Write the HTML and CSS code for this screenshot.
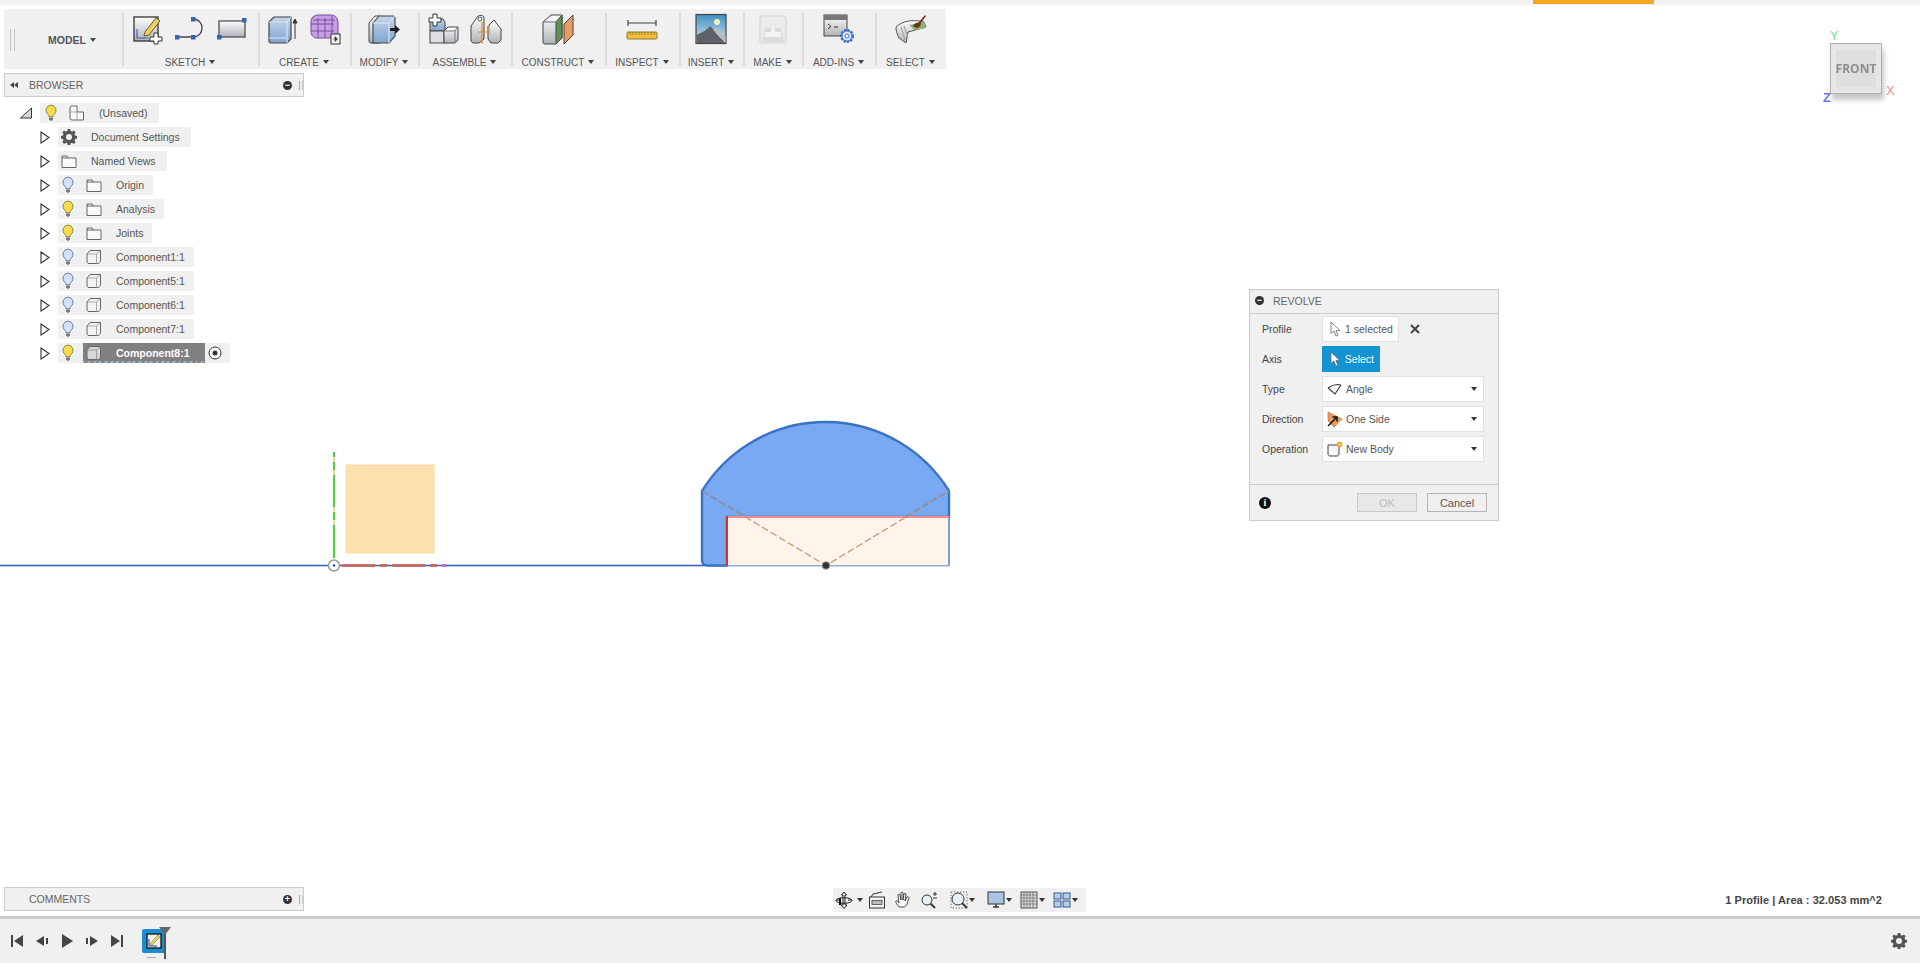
FILE: index.html
```html
<!DOCTYPE html>
<html lang="en">
<head>
    <meta charset="UTF-8">
    <title>Revolve</title>
    <link rel="stylesheet" href="styles.css">
</head>
<body>
    <svg class="defs" width="0" height="0">
        <defs>
            <linearGradient id="gGray" x1="0" y1="0" x2="0" y2="1"><stop offset="0" stop-color="#ffffff"/><stop offset="1" stop-color="#aeb2b8"/></linearGradient>
            <linearGradient id="gBlue" x1="0" y1="0" x2="0" y2="1"><stop offset="0" stop-color="#c4d6ea"/><stop offset="1" stop-color="#7fa4cf"/></linearGradient>
            <linearGradient id="gSky" x1="0" y1="0" x2="0" y2="1"><stop offset="0" stop-color="#3f8fc4"/><stop offset="1" stop-color="#d8e6ea"/></linearGradient>
            <symbol id="i-bulb-y" viewBox="0 0 16 16"><path d="M8 1a4.600 4.600 0 0 0-2.600 8.300c.6.600.7 1.200.8 2h3.600c.1-.8.2-1.400.8-2A4.600 4.600 0 0 0 8 1z" fill="#fbdc4e" stroke="#8a7a3a" stroke-width=".8"/><path d="M6.300 12h3.400v1.600l-1 1.200H7.300l-1-1.200z" fill="#777"/></symbol>
            <symbol id="i-bulb-b" viewBox="0 0 16 16"><path d="M8 1a4.600 4.600 0 0 0-2.600 8.300c.6.600.7 1.200.8 2h3.600c.1-.8.2-1.400.8-2A4.600 4.600 0 0 0 8 1z" fill="#d5e3fa" stroke="#5f74a8" stroke-width=".8"/><path d="M6.300 12h3.400v1.600l-1 1.200H7.300l-1-1.200z" fill="#777"/></symbol>
            <symbol id="i-folder" viewBox="0 0 16 16"><path d="M1 3h5l1 2h8v9.500H1z" fill="#fbfbfb" stroke="#555" stroke-width=".9"/><path d="M1 5h6" fill="none" stroke="#555" stroke-width=".9"/></symbol>
            <symbol id="i-comp" viewBox="0 0 16 16"><path d="M4 1.500h10.500V11c0 2-1 3.500-3 3.500H3C1.500 14.500 1 13.500 1 12V5z" fill="#f4f4f4" stroke="#555" stroke-width=".9"/><path d="M1 5h9.500l4-3.500M10.500 5v9.500" fill="none" stroke="#888" stroke-width=".7"/></symbol>
            <symbol id="i-root" viewBox="0 0 16 16"><path d="M3 1h5v6h6.500v8H3a2 2 0 0 1-2-2V3a2 2 0 0 1 2-2z" fill="#fafafa" stroke="#555" stroke-width=".9"/><path d="M8 7H1M8 7v8" fill="none" stroke="#888" stroke-width=".7"/></symbol>
            <symbol id="i-gear" viewBox="0 0 16 16"><path d="M6.700 0h2.600l.4 2.100 1.400.6L12.900 1.500l1.800 1.800-1.200 1.800.6 1.400 2 .4v2.600l-2 .4-.6 1.400 1.200 1.800-1.800 1.800-1.800-1.200-1.400.6-.4 2.100H6.700l-.4-2.100-1.400-.6-1.800 1.200-1.800-1.800 1.200-1.800-.6-1.400-2-.4V6.900l2-.4.6-1.400-1.200-1.800 1.800-1.800 1.800 1.200 1.400-.6zM8 5a3 3 0 1 0 0 6 3 3 0 0 0 0-6z" fill="#555" fill-rule="evenodd"/></symbol>
            <symbol id="i-pointer" viewBox="0 0 14 16"><path d="M2 1l9 8.500H7l2 5-2 .5-2-5-3 2.500z" fill="currentColor" stroke="#667" stroke-width=".8"/></symbol>
        </defs>
    </svg>

    <div class="top-strip"><div class="top-progress"></div></div>

    <main class="workspace">
        <svg class="canvas" viewBox="0 5 1920 911" width="1920" height="911">
            <line x1="0" y1="565.500" x2="949" y2="565.500" stroke="#2d62c4" stroke-width="1.300"/>
            <rect x="346" y="465" width="88" height="88" fill="#fde1b0" stroke="#fdd9a5"/>
            <path d="M334 452v5M334 462v8M334 475v32M334 512v8M334 525v33" stroke="#4fd33c" stroke-width="2"/>
            <path d="M334 457v5M334 470v5M334 507v5M334 520v5" stroke="#e4dca8" stroke-width="2"/>
            <path d="M342 565.500h33M380 565.500h7M392 565.500h33M430 565.500h7" stroke="#c96a6a" stroke-width="3"/>
            <path d="M442 565.500h5" stroke="#a67ac4" stroke-width="3"/>
            <circle cx="334" cy="565.500" r="5.500" fill="#fff" stroke="#9a9a9a" stroke-width="1.500"/>
            <circle cx="334" cy="565.500" r="1.200" fill="#2244bb"/>

            <path d="M702 491A145 145 0 0 1 949 491V517H727V565.500H708Q702 565.500 702 560z" fill="#7aa9f3" stroke="#3a72c6" stroke-width="2.400"/>
            <rect x="727" y="517" width="222" height="48.500" fill="#fef4e9"/>
            <path d="M949 517V565.500" stroke="#4b7fd0" stroke-width="1.500"/>
            <path d="M727 517H949" stroke="#f58a8e" stroke-width="2"/>
            <path d="M727 516V565.500" stroke="#e62a2a" stroke-width="2"/>
            <path d="M702 491L826 565.500L949 491" fill="none" stroke="#c89a6e" stroke-width="1.300" stroke-dasharray="7 3"/>
            <path d="M702 491L746 517M905 517L949 491" fill="none" stroke="#7f8ba6" stroke-width="1.300" stroke-dasharray="7 3"/>
            <circle cx="826" cy="565.500" r="3.800" fill="#333" stroke="#999"/>
        </svg>

        <nav class="toolbar">
            <div class="tool-group model-group">
                <span class="grip"></span>
                <span class="model-label">MODEL</span><span class="caret"></span>
            </div>
            <div class="tool-group w-sketch">
                <div class="tool-icons">
                    <svg class="tool" viewBox="0 0 32 32"><rect x="2" y="4" width="24" height="24" fill="url(#gGray)" stroke="#333" stroke-width="1.300"/><path d="M5 16v9h11" fill="none" stroke="#3b63b5" stroke-width="1.200"/><path d="M13 19L24 5l4 3-11 14-5 1z" fill="#f3cf63" stroke="#6b5a2a"/><path d="M22 20h4v4h4v4h-4v3h-4v-3h-4v-4h4z" fill="#fff" stroke="#333"/></svg>
                    <svg class="tool" viewBox="0 0 32 32"><path d="M3 24h16M19 6c12 0 12 18 0 18" fill="none" stroke="#444" stroke-width="1.300"/><rect x="1" y="22" width="4.500" height="4.500" fill="#3b63b5"/><rect x="17" y="22" width="4.500" height="4.500" fill="#3b63b5"/><rect x="17" y="4" width="4.500" height="4.500" fill="#3b63b5"/></svg>
                    <svg class="tool" viewBox="0 0 32 32"><rect x="3" y="8" width="26" height="16" fill="url(#gGray)" stroke="#444" stroke-width="1.200"/><rect x="26" y="5" width="4.500" height="4.500" fill="#3b63b5"/><rect x="1" y="22" width="4.500" height="4.500" fill="#3b63b5"/></svg>
                </div>
                <div class="tool-label">SKETCH<span class="caret"></span></div>
            </div>
            <div class="tool-group w-create">
                <div class="tool-icons">
                    <svg class="tool" viewBox="0 0 32 32"><path d="M2 9l5-5h17v22l-4 4H4a2 2 0 0 1-2-2z" fill="url(#gBlue)" stroke="#444" stroke-width="1.200"/><path d="M2 9h18v21M20 9l4-5M2 25h18" fill="none" stroke="#dfe8f2" stroke-width="1"/><path d="M28 26V7M26 10l2-4 2 4z" fill="#333" stroke="#333"/></svg>
                    <svg class="tool" viewBox="0 0 32 32"><path d="M9 2h13c5 0 7 4 7 8v12l-4 3H8c-4 0-6-3-6-7V9c0-4 3-7 7-7z" fill="#c79ee4" stroke="#6f4a96"/><path d="M2 11h23M2 18h23M9 5v20M16 5v20M23 3v22M4 7h22" fill="none" stroke="#6f4a96" stroke-width=".9"/><rect x="22" y="21" width="9" height="10" fill="#f4f4f4" stroke="#333"/><path d="M24 26h3M26 23.500l2.500 2.500-2.500 2.500z" fill="#333" stroke="#333" stroke-width=".6"/></svg>
                </div>
                <div class="tool-label">CREATE<span class="caret"></span></div>
            </div>
            <div class="tool-group w-modify">
                <div class="tool-icons">
                    <svg class="tool" viewBox="0 0 32 32"><path d="M1 10l6-7h5v27H3a2 2 0 0 1-2-2z" fill="url(#gGray)" stroke="#444"/><path d="M5 10l6-7h14a2 2 0 0 1 2 2v18l-6 7H5z" fill="url(#gBlue)" stroke="#444" stroke-width="1.100"/><path d="M5 10h16v20M21 10l6-7" fill="none" stroke="#e1e9f2"/><path d="M22 15h5v-3l5 4.500-5 4.500v-3h-5z" fill="#222"/></svg>
                </div>
                <div class="tool-label">MODIFY<span class="caret"></span></div>
            </div>
            <div class="tool-group w-assemble">
                <div class="tool-icons">
                    <svg class="tool" viewBox="0 0 32 32"><path d="M2 6h13l2 3v9H2z" fill="url(#gBlue)" stroke="#444"/><rect x="2" y="18" width="14" height="12" fill="#dcdee2" stroke="#444"/><path d="M16 18l4-4h10v13l-3 3H16z" fill="url(#gGray)" stroke="#444"/><path d="M16 18h11v12M27 18l3-4" fill="none" stroke="#777"/><path d="M5 1h4v4h4v4H9v4H5V9H1V5h4z" fill="#fff" stroke="#333"/></svg>
                    <svg class="tool" viewBox="0 0 32 32"><path d="M1 28V13L8 3c2-1 5-1 6 1v22l-5 4H3z" fill="url(#gGray)" stroke="#444"/><path d="M18 13l6-6 7 9v11l-3 3h-7l-3-4z" fill="url(#gGray)" stroke="#444"/><circle cx="10" cy="6" r="2" fill="#fff" stroke="#555"/><path d="M12 9v22M8 19h11M19 12v9" fill="none" stroke="#e58a3a" stroke-width="1.200"/></svg>
                </div>
                <div class="tool-label">ASSEMBLE<span class="caret"></span></div>
            </div>
            <div class="tool-group w-construct">
                <div class="tool-icons">
                    <svg class="tool" viewBox="0 0 32 32"><path d="M1 9l8-7h11v23l-6 6H3a2 2 0 0 1-2-2z" fill="url(#gGray)" stroke="#444"/><path d="M14 9v22l6-6V2z" fill="#5d9450" stroke="#444"/><path d="M1 9h13l6-7" fill="none" stroke="#777"/><path d="M22 11l9-9v20l-9 9z" fill="#ea9a63" stroke="#444"/></svg>
                </div>
                <div class="tool-label">CONSTRUCT<span class="caret"></span></div>
            </div>
            <div class="tool-group w-inspect">
                <div class="tool-icons">
                    <svg class="tool" viewBox="0 0 32 32"><path d="M2 10h28M2 7v6M30 7v6" fill="none" stroke="#444" stroke-width="1.200"/><rect x="1" y="19" width="30" height="7" rx="1" fill="#efbd3a" stroke="#8b7a3a"/><path d="M4 19v3M7 19v3M10 19v3M13 19v3M16 19v3M19 19v3M22 19v3M25 19v3M28 19v3" stroke="#8b6d1a" stroke-width=".7"/></svg>
                </div>
                <div class="tool-label">INSPECT<span class="caret"></span></div>
            </div>
            <div class="tool-group w-insert">
                <div class="tool-icons">
                    <svg class="tool" viewBox="0 0 32 32"><rect x="1" y="1.500" width="30" height="29" fill="url(#gSky)" stroke="#444" stroke-width="1.200"/><circle cx="22" cy="9" r="3" fill="#f5efb5"/><path d="M1.500 22l8-4 6-5 6 8 9 9H1.500z" fill="#5e6268"/><path d="M19 17l3-2 8.500 8v7z" fill="#b9bec4"/></svg>
                </div>
                <div class="tool-label">INSERT<span class="caret"></span></div>
            </div>
            <div class="tool-group w-make">
                <div class="tool-icons">
                    <svg class="tool" viewBox="0 0 32 32"><path d="M3 5l2-2h22l2 2v24l-1 1H4l-1-1z" fill="#ececec" stroke="#d6d6d6" stroke-width="1.200"/><path d="M5 29l3-14h16l3 14z" fill="#dcdcdc"/><path d="M14 11h4v6h2l-4 4-4-4h2z" fill="#f4f4f4" stroke="#d0d0d0" stroke-width=".6"/><rect x="8" y="19" width="16" height="5" fill="#f4f4f4"/></svg>
                </div>
                <div class="tool-label">MAKE<span class="caret"></span></div>
            </div>
            <div class="tool-group w-addins">
                <div class="tool-icons">
                    <svg class="tool" viewBox="0 0 32 32"><rect x="1" y="2" width="23" height="21" fill="url(#gGray)" stroke="#444"/><rect x="1" y="2" width="23" height="5" fill="#777"/><path d="M5 11l3 2.500L5 16M11 14h4" fill="none" stroke="#333"/><circle cx="24" cy="23" r="5.500" fill="none" stroke="#3b6cc0" stroke-width="3" stroke-dasharray="2.200 1"/><circle cx="24" cy="23" r="5" fill="#dbe7f6" stroke="#3b6cc0"/><circle cx="24" cy="23" r="2" fill="#fff" stroke="#3b6cc0"/></svg>
                </div>
                <div class="tool-label">ADD-INS<span class="caret"></span></div>
            </div>
            <div class="tool-group w-select">
                <div class="tool-icons">
                    <svg class="tool" viewBox="0 0 32 32"><path d="M1 14c6-6 17-8 28-5l2 5-18 5-2 11-7-5c-2-4-3-7-3-11z" fill="url(#gGray)" stroke="#555"/><path d="M6 14l4 13M9 13l4 11" stroke="#999" fill="none"/><path d="M14 12l15-3 2 6-12 2z" fill="#8bb478"/><path d="M18 13c1-3 4-3 6-4l6-7 1 1-5 7c0 3-2 5-5 5z" fill="#6b3a1e"/></svg>
                </div>
                <div class="tool-label">SELECT<span class="caret"></span></div>
            </div>
        </nav>

        <section class="panel browser-panel">
            <span class="panel-back"></span>
            <span class="panel-title">BROWSER</span>
            <span class="round-btn">&minus;</span>
            <span class="panel-grip"></span>
        </section>

        <div class="tree">
            <div class="row root-row">
                <svg class="root-caret" viewBox="0 0 12 12"><path d="M11.500 1v10H.5z" fill="#d8d8d8" stroke="#333"/></svg>
                <div class="node">
                    <svg class="bulb bulb-root"><use href="#i-bulb-y"/></svg>
                    <svg class="ic ic-item"><use href="#i-root"/></svg>
                    <span class="name name-root">(Unsaved)</span>
                </div>
            </div>
            <div class="row">
                <svg class="row-caret" viewBox="0 0 10 13"><path d="M1 1l8 5.500L1 12z" fill="#fff" stroke="#333" stroke-width="1.100"/></svg>
                <div class="node">
                    <svg class="ic ic-wide"><use href="#i-gear"/></svg>
                    <span class="name name-short">Document Settings</span>
                </div>
            </div>
            <div class="row">
                <svg class="row-caret" viewBox="0 0 10 13"><path d="M1 1l8 5.500L1 12z" fill="#fff" stroke="#333" stroke-width="1.100"/></svg>
                <div class="node">
                    <svg class="ic ic-wide"><use href="#i-folder"/></svg>
                    <span class="name name-short">Named Views</span>
                </div>
            </div>
            <div class="row">
                <svg class="row-caret" viewBox="0 0 10 13"><path d="M1 1l8 5.500L1 12z" fill="#fff" stroke="#333" stroke-width="1.100"/></svg>
                <div class="node">
                    <svg class="bulb"><use href="#i-bulb-b"/></svg>
                    <svg class="ic ic-item"><use href="#i-folder"/></svg>
                    <span class="name">Origin</span>
                </div>
            </div>
            <div class="row">
                <svg class="row-caret" viewBox="0 0 10 13"><path d="M1 1l8 5.500L1 12z" fill="#fff" stroke="#333" stroke-width="1.100"/></svg>
                <div class="node">
                    <svg class="bulb"><use href="#i-bulb-y"/></svg>
                    <svg class="ic ic-item"><use href="#i-folder"/></svg>
                    <span class="name">Analysis</span>
                </div>
            </div>
            <div class="row">
                <svg class="row-caret" viewBox="0 0 10 13"><path d="M1 1l8 5.500L1 12z" fill="#fff" stroke="#333" stroke-width="1.100"/></svg>
                <div class="node">
                    <svg class="bulb"><use href="#i-bulb-y"/></svg>
                    <svg class="ic ic-item"><use href="#i-folder"/></svg>
                    <span class="name">Joints</span>
                </div>
            </div>
            <div class="row">
                <svg class="row-caret" viewBox="0 0 10 13"><path d="M1 1l8 5.500L1 12z" fill="#fff" stroke="#333" stroke-width="1.100"/></svg>
                <div class="node">
                    <svg class="bulb"><use href="#i-bulb-b"/></svg>
                    <svg class="ic ic-item"><use href="#i-comp"/></svg>
                    <span class="name">Component1:1</span>
                </div>
            </div>
            <div class="row">
                <svg class="row-caret" viewBox="0 0 10 13"><path d="M1 1l8 5.500L1 12z" fill="#fff" stroke="#333" stroke-width="1.100"/></svg>
                <div class="node">
                    <svg class="bulb"><use href="#i-bulb-b"/></svg>
                    <svg class="ic ic-item"><use href="#i-comp"/></svg>
                    <span class="name">Component5:1</span>
                </div>
            </div>
            <div class="row">
                <svg class="row-caret" viewBox="0 0 10 13"><path d="M1 1l8 5.500L1 12z" fill="#fff" stroke="#333" stroke-width="1.100"/></svg>
                <div class="node">
                    <svg class="bulb"><use href="#i-bulb-b"/></svg>
                    <svg class="ic ic-item"><use href="#i-comp"/></svg>
                    <span class="name">Component6:1</span>
                </div>
            </div>
            <div class="row">
                <svg class="row-caret" viewBox="0 0 10 13"><path d="M1 1l8 5.500L1 12z" fill="#fff" stroke="#333" stroke-width="1.100"/></svg>
                <div class="node">
                    <svg class="bulb"><use href="#i-bulb-b"/></svg>
                    <svg class="ic ic-item"><use href="#i-comp"/></svg>
                    <span class="name">Component7:1</span>
                </div>
            </div>
            <div class="row">
                <svg class="row-caret" viewBox="0 0 10 13"><path d="M1 1l8 5.500L1 12z" fill="#fff" stroke="#333" stroke-width="1.100"/></svg>
                <div class="node node-active">
                    <svg class="bulb"><use href="#i-bulb-y"/></svg>
                    <div class="active-pill">
                        <svg class="ic ic-pill"><use href="#i-comp"/></svg>
                        <span class="name name-pill">Component8:1</span>
                    </div>
                    <svg class="radio" viewBox="0 0 14 14"><circle cx="7" cy="7" r="6" fill="#fff" stroke="#333"/><circle cx="7" cy="7" r="2.500" fill="#333"/></svg>
                </div>
            </div>
        </div>

        <section class="panel comments-panel">
            <span class="panel-title">COMMENTS</span>
            <span class="round-btn">+</span>
            <span class="panel-grip"></span>
        </section>

        <section class="dialog">
            <header class="dialog-head">
                <span class="round-btn">&minus;</span>
                <span class="dialog-title">REVOLVE</span>
            </header>
            <div class="dialog-body">
                <div class="field">
                    <label class="field-label">Profile</label>
                    <div class="pick">
                        <svg class="pick-ic pointer-white" viewBox="0 0 14 16"><use href="#i-pointer"/></svg>1 selected
                    </div>
                    <svg class="clear-x" viewBox="0 0 10 10"><path d="M1 1l8 8M9 1l-8 8" stroke="#444" stroke-width="2"/></svg>
                </div>
                <div class="field">
                    <label class="field-label">Axis</label>
                    <div class="pick pick-on">
                        <svg class="pick-ic pointer-white" viewBox="0 0 14 16"><use href="#i-pointer"/></svg>Select
                    </div>
                </div>
                <div class="field">
                    <label class="field-label">Type</label>
                    <div class="combo">
                        <svg class="combo-ic" viewBox="0 0 16 16"><path d="M1 7l7 6 6-9M1 7c4-3 9-4 13-3" fill="none" stroke="#333" stroke-width="1.100"/></svg>
                        <span>Angle</span><span class="combo-caret"></span>
                    </div>
                </div>
                <div class="field">
                    <label class="field-label">Direction</label>
                    <div class="combo">
                        <svg class="combo-ic" viewBox="0 0 16 16"><path d="M1 1l14 7-8 8-6-6z" fill="#ee9a5e" stroke="#a8683a" stroke-width=".6"/><path d="M1 15l8-8M5.500 6h4.500v4.500" fill="none" stroke="#111" stroke-width="1.500"/></svg>
                        <span>One Side</span><span class="combo-caret"></span>
                    </div>
                </div>
                <div class="field">
                    <label class="field-label">Operation</label>
                    <div class="combo">
                        <svg class="combo-ic" viewBox="0 0 16 16"><path d="M1 4h11v9c0 1-1 2-2 2H3c-1 0-2-1-2-2z" fill="#f6f6f6" stroke="#444"/><circle cx="12.500" cy="3.500" r="2.800" fill="#f0a020"/><circle cx="12.500" cy="3.500" r="1" fill="#fff"/></svg>
                        <span>New Body</span><span class="combo-caret"></span>
                    </div>
                </div>
            </div>
            <footer class="dialog-foot">
                <span class="info-btn">i</span>
                <button class="btn btn-off">OK</button>
                <button class="btn">Cancel</button>
            </footer>
        </section>

        <div class="viewcube">
            <span class="axis axis-y">Y</span>
            <div class="cube"><span class="cube-face">FRONT</span></div>
            <span class="axis axis-x">X</span>
            <span class="axis axis-z">Z</span>
        </div>

        <div class="nav-bar">
            <svg class="nav-ic" viewBox="0 0 18 18"><path d="M9 1l-2.500 3h1.500v10H6l3 3.500 3-3.500h-2V4h1.500zM1 9h4M13 9h4" fill="none" stroke="#222"/><ellipse cx="9" cy="9.500" rx="8" ry="2.800" fill="none" stroke="#222"/><path d="M5 7v7" stroke="#111" stroke-width="2"/></svg>
            <span class="nav-caret nav-caret-far"></span>
            <svg class="nav-ic gap-xs" viewBox="0 0 18 18"><rect x="1.500" y="6" width="15" height="11" fill="#f4f4f4" stroke="#333"/><rect x="4" y="9.500" width="10" height="4" fill="#bbb" stroke="#333" stroke-width=".7"/><path d="M3 6l2-3 9-2" fill="none" stroke="#333"/></svg>
            <svg class="nav-ic gap-md" viewBox="0 0 18 18"><path d="M5 16c-2-3-4-5-3-6s2 1 3 2L4 4c0-1 2-1 2 0l1 5V2c0-1 2-1 2 0v7l1-6c0-1 2-1 2 0l-1 7 2-4c1-1 2 0 2 1l-2 6c-1 2-2 3-3 3z" fill="#fff" stroke="#333" stroke-width=".9"/></svg>
            <svg class="nav-ic gap-md" viewBox="0 0 18 18"><circle cx="7" cy="9" r="5" fill="#e7f0f5" stroke="#333"/><path d="M10.500 12.500L15 17" stroke="#333" stroke-width="1.800"/><path d="M13 3h4M15 1v4M13 7h4" stroke="#333"/></svg>
            <svg class="nav-ic gap-lg" viewBox="0 0 18 18"><rect x="1" y="1" width="16" height="16" fill="none" stroke="#777" stroke-dasharray="1.500 1.500"/><circle cx="8" cy="8" r="6" fill="#e7f0f5" stroke="#333"/><path d="M12 12l5 5" stroke="#333" stroke-width="1.800"/></svg>
            <span class="nav-caret"></span>
            <svg class="nav-ic gap-lg" viewBox="0 0 18 18"><rect x="1" y="1" width="16" height="12" fill="#a9c4e4" stroke="#333"/><path d="M6 16h6M9 13v3" stroke="#333" stroke-width="1.500"/></svg>
            <span class="nav-caret"></span>
            <svg class="nav-ic gap-md" viewBox="0 0 18 18"><rect x="1" y="1" width="16" height="16" fill="#ddd" stroke="#555"/><path d="M4 1v16M7 1v16M10 1v16M13 1v16M1 4h16M1 7h16M1 10h16M1 13h16" stroke="#666" stroke-width=".7"/></svg>
            <span class="nav-caret"></span>
            <svg class="nav-ic gap-md" viewBox="0 0 18 18"><rect x="1" y="2" width="7" height="6" fill="#b4cdea" stroke="#36598f"/><rect x="10" y="2" width="7" height="6" fill="#b4cdea" stroke="#36598f"/><rect x="1" y="10" width="7" height="6" fill="#b4cdea" stroke="#36598f"/><rect x="10" y="10" width="7" height="6" fill="#b4cdea" stroke="#36598f"/></svg>
            <span class="nav-caret"></span>
        </div>

        <div class="status-text">1 Profile | Area : 32.053 mm^2</div>
    </main>

    <footer class="timeline">
        <div class="player">
            <svg class="play-ic" viewBox="0 0 14 14"><path d="M1 1h2v12H1zM13 1v12L4 7z" fill="#444"/></svg>
            <svg class="play-ic" viewBox="0 0 14 14"><path d="M9 2v10L1 7zM11 4h2v6h-2z" fill="#444"/></svg>
            <svg class="play-ic" viewBox="0 0 14 14"><path d="M2 0l11 7-11 7z" fill="#444"/></svg>
            <svg class="play-ic" viewBox="0 0 14 14"><path d="M5 2v10l8-5zM1 4h2v6H1z" fill="#444"/></svg>
            <svg class="play-ic" viewBox="0 0 14 14"><path d="M13 1h-2v12h2zM1 1v12l9-6z" fill="#444"/></svg>
        </div>
        <div class="feature">
            <svg class="feature-ic" viewBox="0 0 24 24"><rect width="24" height="24" rx="2" fill="#1a8fd0"/><rect x="5" y="5" width="14" height="14" fill="#eef0f2" stroke="#111" stroke-width="1.300"/><path d="M7 10v7h8" fill="none" stroke="#223a7a"/><path d="M8 15l8-9 2 2-8 8z" fill="#f3cf63" stroke="#6b5a2a" stroke-width=".5"/></svg>
            <span class="marker"></span>
            <span class="feature-tick"></span>
        </div>
        <svg class="settings-ic"><use href="#i-gear"/></svg>
    </footer>
</body>
</html>
```

FILE: styles.css
```css
html, body {
    height: 100%;
}

body {
    margin: 0;
    display: flex;
    flex-direction: column;
    font-family: "Liberation Sans", Arial, sans-serif;
    font-size: 10.5px;
    color: #555;
    background-color: #ffffff;
    overflow: hidden;
}

.defs {
    display: block;
    flex: none;
}

.top-strip {
    height: 5px;
    flex: none;
    background-color: #f2f2f2;
    display: flex;
    padding-left: 1533px;
}

.top-progress {
    width: 121px;
    height: 4px;
    background-color: #f5a623;
}

.workspace {
    position: relative;
    flex: 1;
    overflow: hidden;
}

.canvas {
    position: absolute;
    left: 0;
    top: 0;
}

/* toolbar */
.toolbar {
    position: absolute;
    left: 4px;
    top: 4px;
    height: 60px;
    display: flex;
    background-color: #f0f0f0;
}

.tool-group {
    display: flex;
    flex-direction: column;
    align-items: center;
    box-sizing: border-box;
    height: 60px;
    padding-top: 4px;
    position: relative;
}

.tool-group + .tool-group::before {
    content: "";
    position: absolute;
    left: 0;
    top: 4px;
    bottom: 3px;
    width: 2px;
    background-color: #dcdcdc;
}

.model-group {
    width: 118px;
    flex-direction: row;
    padding-top: 2px;
}

.grip {
    width: 3px;
    height: 22px;
    margin-left: 6px;
    margin-right: 33px;
    border-left: 1px solid #c4c4c4;
    border-right: 1px solid #c4c4c4;
}

.model-label {
    font-weight: bold;
    font-size: 10.5px;
    color: #555;
}

.w-sketch { width: 136px; }
.w-create { width: 92px; }
.w-modify { width: 68px; }
.w-assemble { width: 93px; }
.w-construct { width: 94px; }
.w-inspect { width: 74px; }
.w-insert { width: 64px; }
.w-make { width: 59px; }
.w-addins { width: 73px; }
.w-select { width: 71px; }

.tool-icons {
    display: flex;
    gap: 10px;
    height: 32px;
}

.tool {
    width: 32px;
    height: 32px;
}

.tool-label {
    margin-top: 12px;
    font-size: 10px;
    line-height: 12px;
    color: #555;
    white-space: nowrap;
}

.caret {
    display: inline-block;
    margin-left: 4px;
    vertical-align: 2px;
    border-left: 3px solid transparent;
    border-right: 3px solid transparent;
    border-top: 4px solid #444;
}

/* browser and comments */
.panel {
    position: absolute;
    left: 4px;
    width: 300px;
    height: 24px;
    box-sizing: border-box;
    display: flex;
    align-items: center;
    background-color: #f0f0f0;
    border: 1px solid #cccccc;
}

.browser-panel {
    top: 68px;
}

.comments-panel {
    top: 882px;
    padding-left: 24px;
}

.panel-back {
    width: 0;
    height: 0;
    margin-left: 5px;
    margin-right: 15px;
    border-right: 4px solid #444;
    border-top: 3px solid transparent;
    border-bottom: 3px solid transparent;
    position: relative;
}

.panel-back::after {
    content: "";
    position: absolute;
    left: 4px;
    top: -3px;
    border-right: 4px solid #444;
    border-top: 3px solid transparent;
    border-bottom: 3px solid transparent;
}

.panel-title {
    flex: 1;
    font-size: 10.5px;
    color: #666;
}

.round-btn {
    width: 9px;
    height: 9px;
    border-radius: 50%;
    background-color: #333;
    color: #fff;
    font-size: 9px;
    font-weight: bold;
    line-height: 8px;
    text-align: center;
    flex: none;
}

.panel-grip {
    width: 2px;
    height: 9px;
    margin-left: 7px;
    border-left: 1px solid #aaa;
    border-right: 1px solid #ccc;
}

/* tree */
.tree {
    position: absolute;
    left: 0;
    top: 98px;
}

.row {
    display: flex;
    align-items: center;
    height: 20px;
    margin-bottom: 4px;
    padding-left: 40px;
}

.root-row {
    padding-left: 20px;
}

.root-caret {
    width: 12px;
    height: 12px;
    margin-right: 8px;
}

.row-caret {
    width: 10px;
    height: 13px;
    margin-right: 8px;
}

.node {
    display: flex;
    align-items: center;
    height: 20px;
    background-color: #f0f0f0;
    padding-right: 9px;
}

.ic {
    width: 16px;
    height: 16px;
    flex: none;
}

.bulb {
    width: 18px;
    height: 18px;
    flex: none;
    margin-left: 1px;
}

.bulb-root { margin-left: 2px; }
.ic-wide { margin-left: 3px; }
.ic-item { margin-left: 9px; }

.name {
    margin-left: 14px;
    white-space: nowrap;
    color: #555;
}

.name-root { margin-right: 3px; }
.name-short { margin-right: 2px; }

.node-active {
    padding-right: 8px;
}

.active-pill {
    display: flex;
    align-items: center;
    height: 20px;
    margin-left: 6px;
    width: 122px;
    background-color: #808080;
    background-image: repeating-linear-gradient(135deg, #9fb0d0 0, #9fb0d0 2px, transparent 2px, transparent 4px);
    background-size: 100% 2px;
    background-position: bottom;
    background-repeat: no-repeat;
    box-sizing: border-box;
    padding-left: 3px;
}

.ic-pill { opacity: .75; }

.name-pill {
    color: #fff;
    font-weight: bold;
}

.radio {
    width: 14px;
    height: 14px;
    margin-left: 3px;
}

/* revolve dialog */
.dialog {
    position: absolute;
    left: 1249px;
    top: 284px;
    width: 250px;
    height: 232px;
    box-sizing: border-box;
    display: flex;
    flex-direction: column;
    background-color: #f0f0f0;
    border: 1px solid #cccccc;
}

.dialog-head {
    display: flex;
    align-items: center;
    height: 21px;
    padding-bottom: 2px;
    flex: none;
    gap: 9px;
    padding-left: 5px;
    border-bottom: 1px solid #cccccc;
}

.dialog-title {
    font-size: 10.5px;
    color: #666;
}

.dialog-body {
    flex: 1;
}

.field {
    display: flex;
    align-items: center;
    height: 30px;
}

.field-label {
    width: 72px;
    box-sizing: border-box;
    padding-left: 12px;
    flex: none;
    font-size: 10.5px;
    color: #444;
}

.pick {
    display: flex;
    align-items: center;
    height: 26px;
    box-sizing: border-box;
    padding-left: 6px;
    padding-right: 5px;
    background-color: #fff;
    border: 1px solid #e0e0e0;
    font-size: 10.5px;
    color: #555;
}

.pick-on {
    background-color: #1193d4;
    border-color: #1193d4;
    color: #fff;
    width: 58px;
}

.pick-ic {
    width: 14px;
    height: 16px;
    margin-right: 2px;
}

.pointer-white {
    color: #fff;
}

.clear-x {
    width: 10px;
    height: 10px;
    margin-left: 11px;
}

.combo {
    display: flex;
    align-items: center;
    gap: 3px;
    width: 162px;
    height: 26px;
    box-sizing: border-box;
    padding-left: 4px;
    padding-right: 6px;
    background-color: #fff;
    border: 1px solid #e0e0e0;
    font-size: 10.5px;
    color: #555;
}

.combo-ic {
    width: 16px;
    height: 16px;
    flex: none;
}

.combo-caret {
    margin-left: auto;
    border-left: 3px solid transparent;
    border-right: 3px solid transparent;
    border-top: 4px solid #333;
}

.dialog-foot {
    display: flex;
    align-items: center;
    height: 35px;
    flex: none;
    padding-left: 9px;
    border-top: 1px solid #cccccc;
}

.info-btn {
    width: 12px;
    height: 12px;
    margin-right: 86px;
    border-radius: 50%;
    background-color: #111;
    color: #fff;
    font: bold 10px/12px "Liberation Serif", serif;
    text-align: center;
}

.btn {
    width: 60px;
    height: 19px;
    padding: 0;
    margin-right: 10px;
    box-sizing: border-box;
    border: 1px solid #b5b5b5;
    background-color: #f0f0f0;
    font: 11px "Liberation Sans", Arial, sans-serif;
    color: #555;
}

.btn-off {
    color: #bbb;
    background-color: #e8e8e8;
    border-color: #c8c8c8;
}

/* view cube */
.viewcube {
    position: absolute;
    left: 1822px;
    top: 24px;
    width: 80px;
    height: 80px;
    filter: blur(.5px);
}

.cube {
    position: absolute;
    left: 8px;
    top: 14px;
    width: 52px;
    height: 51px;
    box-sizing: border-box;
    display: flex;
    align-items: center;
    justify-content: center;
    background-color: #e6e6e6;
    border: 1px solid #b0b0b0;
    box-shadow: 2px 6px 5px rgba(0, 0, 0, .22);
}

.cube-face {
    padding: 10px 0;
    font-family: "Open Sans", sans-serif;
    font-size: 12px;
    font-weight: 700;
    color: #8e8e8e;
    background-color: #dedede;
}

.axis {
    position: absolute;
    font-size: 13px;
    line-height: 13px;
}

.axis-y { left: 8px; top: 0; color: #7be08a; }
.axis-x { left: 64px; top: 55px; color: #f08a8a; }
.axis-z { left: 1px; top: 62px; color: #6a70e8; font-weight: bold; }

/* bottom navigation */
.nav-bar {
    position: absolute;
    left: 833px;
    top: 883px;
    width: 253px;
    height: 24px;
    box-sizing: border-box;
    display: flex;
    align-items: center;
    padding-left: 2px;
    background-color: #f0f0f0;
}

.nav-ic {
    width: 18px;
    height: 18px;
    flex: none;
}

.gap-xs { margin-left: 5px; }
.gap-md { margin-left: 8px; }
.gap-lg { margin-left: 12px; }

.nav-caret {
    margin-left: 1px;
    border-left: 3px solid transparent;
    border-right: 3px solid transparent;
    border-top: 4px solid #333;
}

.nav-caret-far {
    margin-left: 4px;
}

.status-text {
    position: absolute;
    right: 38px;
    top: 889px;
    font-size: 11px;
    letter-spacing: .05px;
    font-weight: bold;
    color: #444;
}

/* timeline */
.timeline {
    height: 47px;
    flex: none;
    box-sizing: border-box;
    display: flex;
    align-items: center;
    padding-left: 10px;
    padding-right: 13px;
    background-color: #f0f0f0;
    border-top: 3px solid #cccccc;
}

.player {
    display: flex;
    gap: 11px;
    margin-right: 18px;
}

.play-ic {
    width: 14px;
    height: 14px;
}

.feature {
    position: relative;
    width: 24px;
    height: 24px;
    flex: 1;
}

.feature-ic {
    width: 24px;
    height: 24px;
}

.marker {
    position: absolute;
    left: 22px;
    top: -2px;
    width: 2px;
    height: 32px;
    background-color: #555;
}

.marker::before {
    content: "";
    position: absolute;
    left: -5px;
    top: 0;
    border-left: 6px solid transparent;
    border-right: 6px solid transparent;
    border-top: 8px solid #666;
}

.feature-tick {
    position: absolute;
    left: 5px;
    top: 28px;
    width: 9px;
    height: 1px;
    background-color: #aaa;
}

.settings-ic {
    width: 16px;
    height: 16px;
}
```
